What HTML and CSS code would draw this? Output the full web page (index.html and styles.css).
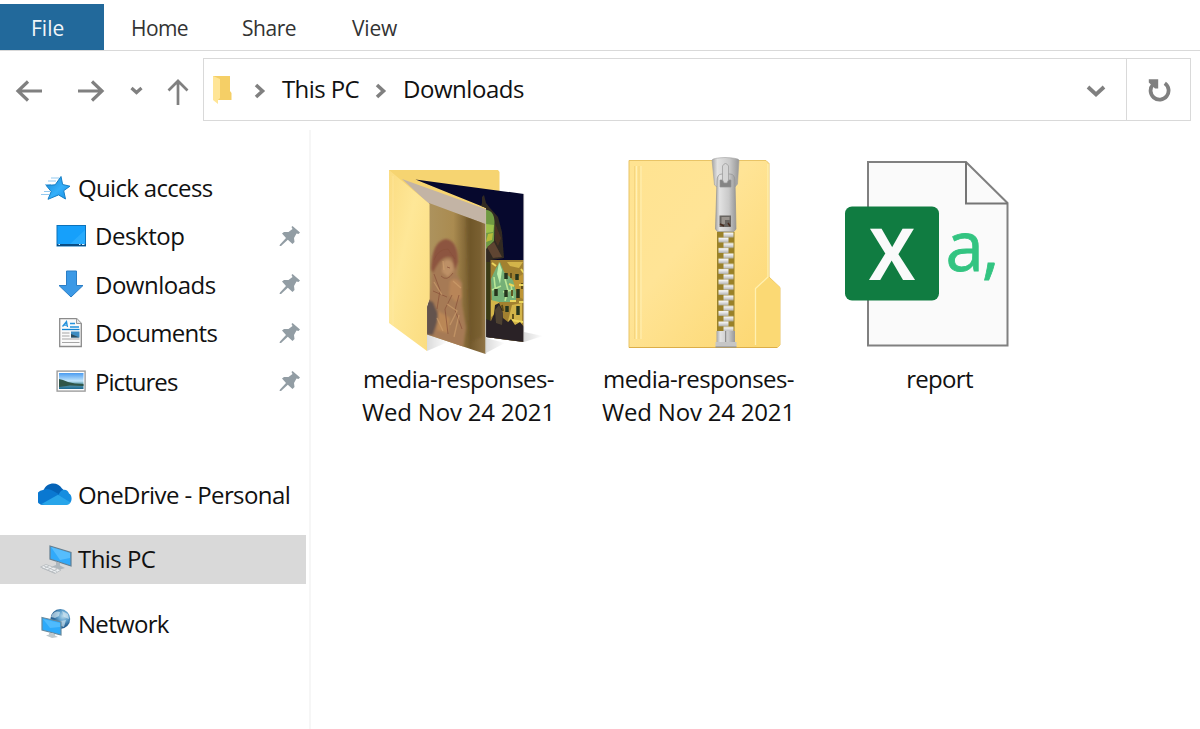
FILE: index.html
```html
<!DOCTYPE html>
<html lang="en">
<head>
<meta charset="utf-8">
<title>Downloads</title>
<link rel="stylesheet" href="styles.css">
</head>
<body>
<div class="window">
  <header class="ribbon">
    <span class="tab tab-file">File</span>
    <span class="tab tab-home">Home</span>
    <span class="tab tab-share">Share</span>
    <span class="tab tab-view">View</span>
  </header>

  <div class="navbar">
    <svg class="history" viewBox="0 0 203 64" fill="none" stroke="#808080">
      <path d="M17 33H42M28 23.500L18 33L28 42.500" stroke-width="3.200"/>
      <path d="M78 33H103M92 23.500L102 33L92 42.500" stroke-width="3.200"/>
      <path d="M131.500 30L136.500 34.500L141.500 30" stroke-width="3.200"/>
      <path d="M178 47V23M168.500 32.500L178 23L187.500 32.500" stroke-width="2.700"/>
    </svg>
    <div class="address">
      <svg class="folder-mini" viewBox="0 0 20 30">
        <path d="M1 1H18V16L19.500 18V25H1Z" fill="#f5cf66"/>
        <path d="M1 1L8 4V23L6 25V29L1 25Z" fill="#ffe596"/>
      </svg>
      <svg class="chevron" viewBox="0 0 12 16"><path d="M2 2L8.500 8L2 14" fill="none" stroke="#808080" stroke-width="3.600"/></svg>
      <span class="crumb crumb-pc">This PC</span>
      <svg class="chevron chevron-second" viewBox="0 0 12 16"><path d="M2 2L8.500 8L2 14" fill="none" stroke="#808080" stroke-width="3.600"/></svg>
      <span class="crumb crumb-downloads">Downloads</span>
      <svg class="dropdown" viewBox="0 0 20 14"><path d="M2 3L10 10.500L18 3" fill="none" stroke="#808080" stroke-width="3.800"/></svg>
      <div class="refresh">
        <svg viewBox="0 0 24 24"><path d="M6 6.500A9 9 0 1 0 17.800 5.300" fill="none" stroke="#808080" stroke-width="3.800"/><path d="M1.800 1.300H11.200V10.500H8L1.800 4.500Z" fill="#808080"/></svg>
      </div>
    </div>
  </div>

  <div class="content">
    <nav class="sidebar">
      <div class="entry root">
        <svg class="icon" viewBox="38 172 34 32">
          <defs><linearGradient id="star" x2="1" y2="1"><stop offset="0" stop-color="#1687d4"/><stop offset=".55" stop-color="#35b0fa"/><stop offset="1" stop-color="#168de2"/></linearGradient></defs>
          <path d="M51 178H59M48 181H56M45 184.500H51M41 194.500H49M44 191.500H50" stroke="#93c9ef" stroke-width="1"/>
          <path d="M61 176.500L62.600 184.500L70 186.200L63.700 190.700L65.500 199L58.600 194.900L48 199.300L51.200 191.500L46.200 185.500L55.200 184.800Z" fill="url(#star)" stroke="#167fc6" stroke-width="1"/>
        </svg>
        <span class="label l-quick">Quick access</span>
      </div>
      <div class="entry child">
        <svg class="icon" viewBox="54 221 34 32">
          <rect x="57" y="225.500" width="28.500" height="20.500" fill="#16a0fb" stroke="#0c72ba" stroke-width="1"/>
          <path d="M69 245L85 230V245Z" fill="#36b2ff" opacity=".6"/>
          <path d="M57 245H86" stroke="#0a4d83" stroke-width="2"/>
          <path d="M58.500 244.500H60M79 244.500H80.500M82 244.500H84.500" stroke="#d3efff" stroke-width="1"/>
        </svg>
        <span class="label l-desktop">Desktop</span>
        <svg class="pin" viewBox="0 0 22 22"><path d="M13.500 1L21 7.500L19.500 9L17.500 8.500L15 13L15.500 17L13.500 19L8.800 14.800L2 21L.5 21L1 19.500L7 13L3 8.500L5 7L9.500 7L13.500 4L12.500 2Z" fill="#929da4"/></svg>
      </div>
      <div class="entry child">
        <svg class="icon" viewBox="54 269 34 32">
          <path d="M66.500 271H76.500V285.500H83L71 297L59 285.500H66.500Z" fill="#3b99e6" stroke="#2b7ec6" stroke-width="1"/>
        </svg>
        <span class="label l-down">Downloads</span>
        <svg class="pin" viewBox="0 0 22 22"><path d="M13.500 1L21 7.500L19.500 9L17.500 8.500L15 13L15.500 17L13.500 19L8.800 14.800L2 21L.5 21L1 19.500L7 13L3 8.500L5 7L9.500 7L13.500 4L12.500 2Z" fill="#929da4"/></svg>
      </div>
      <div class="entry child">
        <svg class="icon" viewBox="54 318 34 32">
          <path d="M59.700 318.500H76.500L81.300 323.500V346.500H59.700Z" fill="#fafafa" stroke="#8b8b8b" stroke-width="1.300"/>
          <path d="M76.500 318.500V323.500H81.300" fill="#e5e5e5" stroke="#999" stroke-width="1"/>
          <path d="M62.500 326.500L66.500 321.500L67.500 327M64 325.200H67M70 323.500H75M70 327H79" fill="none" stroke="#2592dc" stroke-width="1.300"/>
          <path d="M62 329.500H79.500" stroke="#1485d3" stroke-width="1.300"/>
          <path d="M62 333H69.500M62 336H69.500M62 339H79.500M62 342.500H79.500" stroke="#a5a5a5" stroke-width="1"/>
          <rect x="71" y="331.500" width="8.500" height="6" fill="#3c8cc2"/><path d="M71 337.500V334L79.500 337.500Z" fill="#2d4c5c"/>
        </svg>
        <span class="label l-docs">Documents</span>
        <svg class="pin" viewBox="0 0 22 22"><path d="M13.500 1L21 7.500L19.500 9L17.500 8.500L15 13L15.500 17L13.500 19L8.800 14.800L2 21L.5 21L1 19.500L7 13L3 8.500L5 7L9.500 7L13.500 4L12.500 2Z" fill="#929da4"/></svg>
      </div>
      <div class="entry child">
        <svg class="icon" viewBox="54 366 34 32">
          <defs><linearGradient id="sky" x2="0" y2="1"><stop offset="0" stop-color="#4a9bf0"/><stop offset=".5" stop-color="#c3e6fb"/><stop offset=".65" stop-color="#6fa9b8"/><stop offset="1" stop-color="#1a6790"/></linearGradient></defs>
          <rect x="57.100" y="371.100" width="28" height="20" fill="#fff" stroke="#9d9d9d" stroke-width="1.400"/>
          <rect x="59" y="373" width="24.500" height="16" fill="url(#sky)"/>
          <path d="M59 379L63 380L68 382L75 383.500L83.500 384V386L70 385.500L59 387Z" fill="#2f5548"/>
        </svg>
        <span class="label l-pics">Pictures</span>
        <svg class="pin" viewBox="0 0 22 22"><path d="M13.500 1L21 7.500L19.500 9L17.500 8.500L15 13L15.500 17L13.500 19L8.800 14.800L2 21L.5 21L1 19.500L7 13L3 8.500L5 7L9.500 7L13.500 4L12.500 2Z" fill="#929da4"/></svg>
      </div>
      <div class="entry root onedrive">
        <svg class="icon" viewBox="38 479 34 32">
          <path d="M43.500 490.500C46 483 57 480.500 62 488.500L66 492L54 499L43 494Z" fill="#0563b7"/>
          <path d="M44 505A7.500 7.500 0 0 1 43 490C47 487.500 52 490 55 492L64 497L56 505Z" fill="#0a78d1"/>
          <path d="M59 494C61 488 68 488.500 69 493.500C72 495 72.500 500 70 503L59 497Z" fill="#158ee0"/>
          <path d="M41.500 504L58 494.800L70.500 502.500C69 505 67 505 65 505H46C44 505 42.500 504.700 41.500 504Z" fill="#28a5ea"/>
        </svg>
        <span class="label l-one">OneDrive - Personal</span>
      </div>
      <div class="entry root selected">
        <svg class="icon" viewBox="38 543 34 32">
          <path d="M50 546L71 552.500V566L50 559Z" fill="#31aafa" stroke="#647f91" stroke-width="1.200"/>
          <path d="M51 547L70 553V558L60 560Z" fill="#70c9ff" opacity=".6"/>
          <path d="M56 561.500L60 563V565.500L65 568L60 569.500L52 566.500L56 565Z" fill="#aeb7bd"/>
          <path d="M40.500 567L46 564.500L61 570L55 573.500Z" fill="#edf0f2" stroke="#b3b8bb" stroke-width=".8"/>
          <path d="M44 566L57 571.500M42 568L55 573M48 570L53 567M45 568L49 565.800M52 571.500L57 569" stroke="#b2b8bb" stroke-width=".8"/>
        </svg>
        <span class="label l-pc">This PC</span>
      </div>
      <div class="entry root network">
        <svg class="icon" viewBox="38 608 34 32">
          <defs><radialGradient id="globe" cx=".65" cy=".35"><stop offset="0" stop-color="#b8d9ea"/><stop offset=".55" stop-color="#5e9fcb"/><stop offset="1" stop-color="#286294"/></radialGradient></defs>
          <circle cx="60.300" cy="619" r="9.900" fill="url(#globe)"/>
          <path d="M51 617C53 611 58 611 60 612L59 616L55 618ZM62 611L68 614L69 619L64 617ZM60 621L66 620L64 627L61 626Z" fill="#d7e9f2" opacity=".65"/>
          <path d="M42 617.500L61 622V635L42 630Z" fill="#2daafa" stroke="#68899c" stroke-width="1.200"/>
          <path d="M43 619L60 623V627L50 628Z" fill="#72ccff" opacity=".5"/>
          <path d="M49 632.500L55 634V635.500L58 637L52 638L46 635.500L49 634.500Z" fill="#bec8cd"/>
        </svg>
        <span class="label l-net">Network</span>
      </div>
    </nav>

    <main class="files">
      <figure class="file">
        <svg class="thumb" viewBox="338 150 240 214">
          <defs>
            <linearGradient id="flap" x1="0" y1="0" x2="1" y2="1"><stop offset="0" stop-color="#fbdc82"/><stop offset=".4" stop-color="#fee797"/><stop offset="1" stop-color="#fbdc7f"/></linearGradient>
            <linearGradient id="paint" x2="1" y2="0"><stop offset="0" stop-color="#ad9460"/><stop offset=".45" stop-color="#aa8b50"/><stop offset=".72" stop-color="#745a2d"/><stop offset="1" stop-color="#95784a"/></linearGradient>
            <linearGradient id="shade" x2="1" y2="0"><stop offset="0" stop-color="#a6a6a6"/><stop offset="1" stop-color="#fff"/></linearGradient>
            <clipPath id="photoA"><path d="M429 203L485.500 224V354L427 334.500V307L429.500 299Z"/></clipPath>
            <clipPath id="photoB"><path d="M415.500 179.500L524 194V342L486 337V208Z"/></clipPath>
            <filter id="soft" x="-10%" y="-10%" width="120%" height="120%"><feGaussianBlur stdDeviation=".7"/></filter>
            <filter id="haze" x="-20%" y="-20%" width="140%" height="140%"><feGaussianBlur stdDeviation="1.300"/></filter>
          </defs>
          <g filter="url(#soft)" opacity=".4"><path d="M524 332L543 336L524 342Z" fill="url(#shade)"/><path d="M486 338L505 343L486 353Z" fill="url(#shade)"/><path d="M427 334L448 342L427 351Z" fill="url(#shade)"/></g>
          <path d="M389 170H498L499.500 172V300H389Z" fill="#f6d471"/>
          <g clip-path="url(#photoB)">
            <path d="M410 175H530V350H410Z" fill="#06082d"/>
            <g filter="url(#soft)">
              <path d="M480 208L482 203V197L484 195L486 203L490 208L498 217L502 232L504 258L492 260V345H480Z" fill="#302a24"/>
              <path d="M482 210Q494 208 494.500 222L494 241L486 249Z" fill="#6f9a43"/>
              <path d="M486 224L494 225L493 232L486 233Z" fill="#9cc14c"/>
              <path d="M488 234L493 233L492 240L486 242Z" fill="#b7bb3b"/>
              <path d="M495 223L501 238L498 246L495 240Z" fill="#4b3320"/>
              <path d="M487 247L494 242L502 257L493 258Z" fill="#5e4430"/>
              <path d="M486 262H490V345H486Z" fill="#3b3a16"/>
            </g>
            <path d="M490.500 260H525V345H490.500Z" fill="#a28130"/>
            <g filter="url(#soft)">
              <path d="M491 279L496 268L500 262L504 272L510 277L516 284V302L492 302Z" fill="#74b077"/>
              <path d="M499 262L502 270L500 284L497 274Z" fill="#c1efad"/>
              <path d="M494 277L496 295M505 279L508 290L505 301M511 285L513 298M492 290L501 286M503 292L512 290" stroke="#bbe796" stroke-width="1.600" fill="none"/>
              <path d="M507 262H523L519 268L510 266M512 305L522 303V325L507 325ZM491 300L499 302L497 313L491 317Z" fill="#d3b44a"/>
              <path d="M513 280L523 274V299L517 296Z" fill="#be9534"/>
              <path d="M506 273V279M517 274V280M506 290V297M518 289V298M507 306V312M518 306V315M496 289V296" stroke="#28351f" stroke-width="3.500"/>
              <path d="M511 273V278M512 290V296M513 314V319M502 305L503 311M522 283V289" stroke="#594916" stroke-width="1.800"/>
              <path d="M492 263L496 266M509 284L514 286M519 285H524M510 301H516M519 302H524M511 320L523 322M521 269L524 273" stroke="#ecd65b" stroke-width="2"/>
              <path d="M486 319L491 321L494 314L495 305L499 303L502 309L503 318L508 322L511 319L515 325L520 322L525 328V345H486Z" fill="#292425"/>
              <path d="M495 310L499 305L503 313L502 325L496 323Z" fill="#504332"/>
            </g>
          </g>
          <path d="M523.700 194V342" stroke="#c5c4c1" stroke-width=".8"/>
          <path d="M402 179L485.500 209V224.500L429 204Z" fill="#c3b4a5"/>
          <g clip-path="url(#photoA)">
            <path d="M425 200H488V356H425Z" fill="url(#paint)"/>
            <g filter="url(#haze)">
              <path d="M426 310L431 287L432 264Q434 241 446 239Q459 241 458 262L457 275L462 283L462 305L466 328L463 348L427 335Z" fill="#a67a54"/>
              <path d="M431 269Q432 241 446 239Q458 241 458 262L455 270L452 258Q442 253 433 273Z" fill="#8d553f"/>
              <path d="M443 262Q448 257 453 263L454 270L448 277L442 272Z" fill="#bd9066"/>
              <path d="M426 299L433 302L439 316L433 335H426Z" fill="#64534d"/>
              <path d="M450 281Q455 276 461 284L462 297L456 302L449 295Z" fill="#b88559"/>
              <path d="M438 311L450 318L448 333L437 330Z" fill="#ba8756"/>
              <path d="M466 218H482V337L470 342Z" fill="#6a5127" opacity=".45"/>
            </g>
            <g fill="none" filter="url(#soft)">
              <path d="M434 260Q438 249 448 249L455 259M441 276Q447 282 453 273M434 274L440 290L437 309M452 295L445 309L448 334M459 295L455 310L462 329M447 267L450 268M433 291L447 297" stroke="#885039" stroke-width="1" opacity=".7"/>
              <path d="M443 261L444 270M434 282L442 295M453 281L461 288M447 304L457 311L450 325M437 318L443 331M459 315L454 337" stroke="#d1a16e" stroke-width="1.300" opacity=".6"/>
            </g>
          </g>
          <path d="M485.600 209V354" stroke="#bdb7ac" stroke-width=".8"/>
          <path d="M389 170L429.500 204V299L427 306V351L389 323Z" fill="url(#flap)"/>
          <path d="M393 176V325" stroke="#ffebb0" stroke-width=".7" opacity=".6"/>
        </svg>
        <figcaption class="name"><span class="n-a">media-responses-</span><br><span class="n-b">Wed Nov 24 2021</span></figcaption>
      </figure>

      <figure class="file">
        <svg class="thumb" viewBox="578 150 240 214">
          <defs>
            <linearGradient id="body" x1="0" y1="0" x2="1" y2="1"><stop offset="0" stop-color="#ffe391"/><stop offset=".4" stop-color="#ffe496"/><stop offset="1" stop-color="#fcd66e"/></linearGradient>
            <linearGradient id="metal" x2="1" y2="0"><stop offset="0" stop-color="#a5a5a5"/><stop offset=".2" stop-color="#e2e2e2"/><stop offset=".65" stop-color="#c9c9c9"/><stop offset="1" stop-color="#979797"/></linearGradient>
            <linearGradient id="tooth" x2="0" y2="1"><stop offset="0" stop-color="#fff"/><stop offset="1" stop-color="#b4b4b4"/></linearGradient>
            <pattern id="teeth" x="717" y="232" width="18" height="10.480" patternUnits="userSpaceOnUse">
              <rect width="18" height="10.480" fill="#9a8128"/>
              <rect x="6.500" y=".5" width="10" height="4.800" fill="url(#tooth)"/>
              <rect x="1.500" y="5.600" width="10" height="4.800" fill="url(#tooth)"/>
            </pattern>
          </defs>
          <path d="M629 160.500H766L769 163.500V277L780 287.500V345L777.500 347.500H629Z" fill="url(#body)" stroke="#e9c466" stroke-width="1"/>
          <path d="M636.500 166V339M641 166V339" stroke="#fff0b5" stroke-width="1"/>
          <path d="M634.500 166V339M639 166V339" stroke="#f0cd74" stroke-width=".6"/>
          <path d="M768.500 277L756 288.500V345L754 347.500H777.500L780 345V287.500Z" fill="#fbd974"/>
          <path d="M768 164V277L755.500 288.500V345" fill="none" stroke="#fff0b0" stroke-width="1.300"/>
          <path d="M629 347.500H777" stroke="#dcae48" stroke-width="1.200"/>
          <rect x="717" y="232" width="17.500" height="100" fill="url(#teeth)"/>
          <rect x="716.500" y="331" width="18.500" height="12" fill="url(#metal)"/><path d="M725.700 331V342" stroke="#7f7f7f"/>
          <path d="M715.500 342H736.500V347H715.500Z" fill="#c6c6c6"/><path d="M715.500 347H736.500" stroke="#8a8a8a"/>
          <path d="M712 160Q713 158 725 157.500Q738 158 739 160L737.500 184L735 187H717L714.500 185Z" fill="url(#metal)" stroke="#a0a0a0" stroke-width=".6"/>
          <path d="M719 178H731V188H719Z" fill="#858585"/>
          <path d="M717 181Q717 174 722 174H730Q735 174 735 181L736 229L734 231.500H717.500L715.500 229Z M720 180V187H731V180Z" fill="url(#metal)" fill-rule="evenodd" stroke="#929292" stroke-width=".7"/>
          <path d="M722.500 166Q725.500 161 728.500 166V180L727 183H724L722.500 180Z" fill="#d5d5d5" stroke="#989898" stroke-width=".7"/>
          <rect x="719.500" y="215.500" width="11.500" height="11.500" fill="#686460"/><path d="M721.500 217H729.500V220H725V224H721.500Z" fill="#9a948e"/><path d="M720 224L724 226M728 223L730 226" stroke="#4a2e20" stroke-width="1.500"/>
        </svg>
        <figcaption class="name"><span class="n-a">media-responses-</span><br><span class="n-b">Wed Nov 24 2021</span></figcaption>
      </figure>

      <figure class="file">
        <svg class="thumb" viewBox="818 150 240 214">
          <path d="M868 162H966L1007.500 203V345.500H868Z" fill="#fafafa" stroke="#808080" stroke-width="2"/>
          <path d="M966 162V203.500H1007.500" fill="none" stroke="#757575" stroke-width="2"/>
          <rect x="845" y="206.500" width="94" height="94" rx="7" fill="#107c41"/>
          <text class="excel-x" x="892" y="279.500" text-anchor="middle" textLength="46" lengthAdjust="spacingAndGlyphs">X</text>
          <text class="csv" x="945.500" y="270.500">a,</text>
        </svg>
        <figcaption class="name"><span class="n-r">report</span></figcaption>
      </figure>
    </main>
  </div>
</div>
</body>
</html>
```
FILE: styles.css
```css
* { box-sizing: border-box; }
body {
  margin: 0;
  background: #fff;
  color: #111;
  font-family: "Open Sans", "Noto Sans", sans-serif;
  font-size: 24px;
}
svg { display: block; flex: none; }
.window { width: 1200px; height: 729px; display: flex; flex-direction: column; overflow: hidden; }

.ribbon { height: 51px; flex: none; padding-top: 4px; display: flex; border-bottom: 1px solid #d9d9d9; font-size: 21px; color: #333; }
.tab { height: 46px; line-height: 48px; white-space: nowrap; }
.tab-file { width: 104px; padding-left: 31px; background: #22699b; color: #f0f5f9; }
.tab-home { width: 138px; padding-left: 27px; letter-spacing: -.6px; }
.tab-share { width: 110px; letter-spacing: -.45px; }
.tab-view { width: 80px; letter-spacing: -.2px; }

.navbar { height: 79px; flex: none; padding-top: 7px; display: flex; align-items: flex-start; }
.history { width: 203px; height: 64px; }
.address { width: 988px; height: 63px; border: 1px solid #d9d9d9; display: flex; align-items: center; }
.folder-mini { width: 20px; height: 30px; margin-left: 8px; }
.chevron { width: 12px; height: 16px; margin-left: 22px; margin-top: 2px; }
.crumb { white-space: nowrap; line-height: 60px; margin-top: -1px; }
.crumb-pc { width: 77px; margin-left: 16px; letter-spacing: -.6px; }
.chevron-second { margin-left: 16px; }
.crumb-downloads { margin-left: 16px; letter-spacing: -.45px; }
.dropdown { width: 20px; height: 14px; margin-left: auto; margin-right: 20px; margin-top: 2px; }
.refresh { width: 64px; height: 61px; border-left: 1px solid #d9d9d9; display: flex; align-items: center; justify-content: center; }
.refresh svg { width: 24px; height: 24px; }

.content { flex: 1; min-height: 0; display: flex; }
.sidebar { width: 311px; padding: 34px 3px 0 0; border-right: 2px solid #f6f6f6; }
.entry { height: 48.5px; display: flex; align-items: center; }
.root { padding-left: 38px; }
.child { padding-left: 54px; }
.icon { width: 34px; height: 32px; }
.label { margin-left: 6px; white-space: nowrap; line-height: 48px; }
.child .label { margin-left: 7px; margin-top: -1px; }
.l-quick { letter-spacing: -.67px; }
.l-desktop { letter-spacing: -.45px; }
.l-down { letter-spacing: -.5px; }
.l-docs { letter-spacing: -.7px; }
.l-pics { letter-spacing: -.95px; }
.l-one { letter-spacing: -.6px; }
.l-pc { letter-spacing: -.55px; }
.l-net { letter-spacing: -.7px; }
.pin { width: 22px; height: 22px; margin-left: auto; margin-right: 5px; margin-top: -2px; }
.onedrive { margin-top: 64.5px; }
.selected { margin-top: 15.5px; background: #d9d9d9; }
.network { margin-top: 16px; }

.files { padding: 20px 0 0 27px; display: flex; }
.file { width: 240px; margin: 0; }
.thumb { width: 240px; height: 214px; }
.name { margin-top: -2px; padding-left: 1px; text-align: center; line-height: 33px; white-space: nowrap; }
.n-a { letter-spacing: -.58px; }
.n-b { letter-spacing: -.2px; }
.n-r { margin-left: 2px; letter-spacing: -.7px; }
.excel-x { font-size: 72px; font-weight: 700; fill: #fafafa; }
.csv { font-size: 69px; fill: #33c481; stroke: #33c481; stroke-width: .8px; letter-spacing: -2px; }
```
